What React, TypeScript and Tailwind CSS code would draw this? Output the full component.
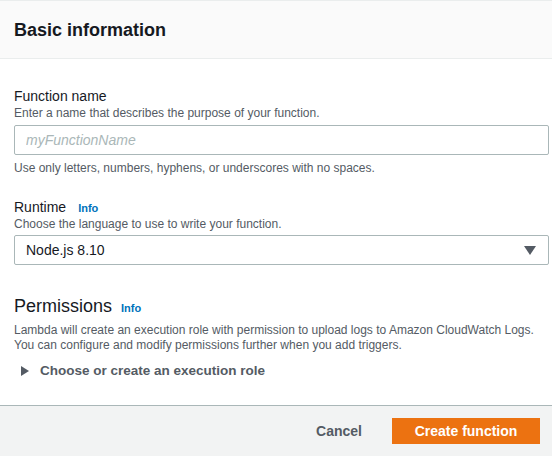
import React from 'react';

const Info: React.FC<{ gap?: string }> = ({ gap = 'ml-3' }) => (
  <span className={`${gap} text-[11px] leading-none font-bold text-[#0073bb] cursor-pointer`}>Info</span>
);

const App: React.FC = () => {
  return (
    <div className="w-[552px] h-[456px] bg-white font-['Liberation_Sans',Arial,sans-serif] text-[#16191f] overflow-hidden flex flex-col">
      <div className="border-t border-[#eaeded] bg-[#fafafa] border-b h-[59px] flex items-center px-[14px]">
        <h2 className="text-[18px] font-bold leading-none">Basic information</h2>
      </div>

      <div className="flex-1 px-[14px] pr-[3px] pt-[28px]">
        <div>
          <label className="block text-[14px] leading-[18px]">Function name</label>
          <p className="text-[12px] leading-[16px] text-[#545b64]">Enter a name that describes the purpose of your function.</p>
          <input
            type="text"
            placeholder="myFunctionName"
            className="mt-[4px] w-full h-[30px] border border-[#aab7b8] rounded-[2px] px-[11px] text-[14px] placeholder:italic placeholder:text-[#aab7b8] outline-none"
          />
          <p className="mt-[5px] text-[12px] leading-[16px] text-[#545b64]">Use only letters, numbers, hyphens, or underscores with no spaces.</p>
        </div>

        <div className="mt-[22px]">
          <label className="flex items-baseline text-[14px] leading-[18px]">Runtime<Info /></label>
          <p className="text-[12px] leading-[16px] text-[#545b64]">Choose the language to use to write your function.</p>
          <div className="mt-[3px] h-[30px] border border-[#aab7b8] rounded-[2px] pl-[11px] pr-[12px] flex items-center justify-between text-[14px]">
            <span>Node.js 8.10</span>
            <svg width="12" height="9" viewBox="0 0 12 9"><path d="M0 0h12L6 9z" fill="#545b64" /></svg>
          </div>
        </div>

        <div className="mt-[30px]">
          <h3 className="text-[18px] leading-[22px] flex items-baseline">Permissions<Info gap="ml-[9px]" /></h3>
          <p className="mt-[6px] text-[12px] leading-[15px] text-[#545b64]">
            Lambda will create an execution role with permission to upload logs to Amazon CloudWatch Logs.<br />
            You can configure and modify permissions further when you add triggers.
          </p>
          <div className="mt-[8px] flex items-center pl-[7px] text-[13.5px] font-bold text-[#545b64]">
            <svg width="8" height="10" viewBox="0 0 8 10" className="mr-[11px]"><path d="M0 0l8 5-8 5z" fill="#545b64" /></svg>
            Choose or create an execution role
          </div>
        </div>
      </div>

      <div className="h-[51px] border-t border-[#aab7b8] bg-[#f2f3f3] flex items-center justify-end pr-[12px] gap-[30px]">
        <button className="text-[14px] font-bold text-[#545b64]">Cancel</button>
        <button className="w-[148px] h-[26px] bg-[#ec7211] text-white text-[14px] font-bold">Create function</button>
      </div>
    </div>
  );
};

export default App;
